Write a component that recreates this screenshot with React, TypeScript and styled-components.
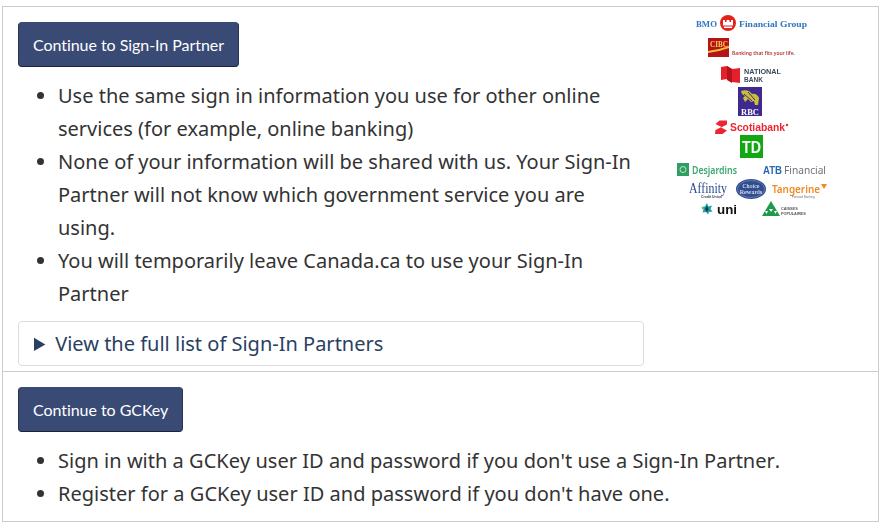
import React from 'react';
import styled, { createGlobalStyle } from 'styled-components';

const GlobalStyle = createGlobalStyle`
  html, body {
    margin: 0;
    padding: 0;
    background: #fff;
  }
  body {
    font-family: "Noto Sans", sans-serif;
    font-size: 20px;
    line-height: 33px;
    color: #333;
  }
`;

const Page = styled.div`
  width: 877px;
  margin: 6px 0 0 2px;
  border: 1px solid #ccc;
  box-sizing: border-box;
`;

const Section = styled.section<{ $divided?: boolean }>`
  padding: 15px 15px 0;
  border-top: ${(p) => (p.$divided ? '1px solid #ccc' : '0')};
`;

const Row = styled.div`
  display: flex;
  align-items: flex-start;
`;

const Main = styled.div`
  width: 626px;
  flex: none;
`;

const Button = styled.a`
  display: block;
  width: fit-content;
  box-sizing: border-box;
  height: 45px;
  padding: 0 14px;
  font-family: Lato, sans-serif;
  font-size: 16px;
  letter-spacing: -0.05px;
  line-height: 43px;
  color: #fff;
  background: #394a75;
  border: 1px solid #333;
  border-color: #3a4a75 #2a3350 #1c2338 #2a3350;
  border-radius: 4px;
`;

const List = styled.ul<{ $loose?: boolean }>`
  margin: 12px 0 11px;
  padding-left: 40px;
  font-kerning: ${(p) => (p.$loose ? 'none' : 'normal')};
  word-spacing: ${(p) => (p.$loose ? '0.08px' : '0')};
`;

const Details = styled.details`
  box-sizing: border-box;
  height: 45px;
  margin-bottom: 5px;
  padding: 5px 15px;
  border: 1px solid #ddd;
  border-radius: 4px;
`;

const Summary = styled.summary`
  color: #284162;
  cursor: pointer;
`;

const Logos = styled.svg`
  display: block;
  flex: none;
  margin: -11px 0 0 16px;
  filter: blur(0.25px);
`;

const serif = '"Liberation Serif", serif';
const sans = '"Liberation Sans", sans-serif';
const noto = '"Noto Sans", sans-serif';

const Fit = ({ w, ...props }: { w: number } & React.SVGProps<SVGTextElement>) => (
  <text textLength={w} lengthAdjust="spacingAndGlyphs" {...props} />
);

const PartnerLogos = () => (
  <Logos width="190" height="210" viewBox="660 10 190 210">
    {/* BMO */}
    <Fit w={21} x="696" y="25.500" fontFamily={serif} fontSize="8.400" fontWeight="700" fill="#2f74c0">BMO</Fit>
    <circle cx="728" cy="22" r="8" fill="#e2231a" />
    <path d="M723 19h2v2h1.500v-2h3v2h1.500v-2h2v5.500h-10z M724 25.500h8v1.500h-8z" fill="#fff" />
    <Fit w={68} x="739" y="25.500" fontFamily={serif} fontSize="8.600" fontWeight="700" fill="#2f74c0">Financial Group</Fit>
    {/* CIBC */}
    <rect x="708" y="37" width="21" height="19" fill="#b5121b" />
    <path d="M708 50q10-1 21-5v2q-11 4-21 5z" fill="#f2c230" />
    <Fit w={18} x="710" y="46" fontFamily={serif} fontSize="7.500" fontWeight="700" fill="#f6d24a">CIBC</Fit>
    <Fit w={63} x="732" y="54" fontFamily={noto} fontSize="5.700" fontWeight="600" fill="#b5343a">Banking that fits your life.</Fit>
    {/* National Bank */}
    <path d="M721 66l6-1 5 3 8-1v15l-8-1-5-3-6 1z" fill="#e4202c" />
    <path d="M727 65v14l5 3v-14z" fill="#b5121b" />
    <Fit w={37} x="744" y="73" fontFamily={sans} fontSize="7" fontWeight="700" fill="#3c4a5c">NATIONAL</Fit>
    <Fit w={19} x="744" y="80.500" fontFamily={sans} fontSize="7" fontWeight="700" fill="#3c4a5c">BANK</Fit>
    {/* RBC */}
    <rect x="738" y="86" width="24" height="29" fill="#3e2a8f" />
    <path d="M741 90c5-2 9 0 11 3 3-1 6 1 7 4l-1 7h-3l-1-4-3 1-3-3-3 3-2-4 2-2-3-2z" fill="#c9bd3a" />
    <path d="M744 93l8 7M748 91l7 8" stroke="#3e2a8f" strokeWidth="1" fill="none" />
    <Fit w={18} x="741" y="114" fontFamily={serif} fontSize="8.500" fontWeight="700" fill="#fff">RBC</Fit>
    {/* Scotiabank */}
    <path d="M727 119.500h-7.500l-4 3.500 6 3-6 3-.5 4h7.500l4.500-3.500-6-3 6-3z" fill="#ec2434" />
    <Fit w={55} x="730" y="130" fontFamily={sans} fontSize="11" fontWeight="700" fill="#ec2434">Scotiabank</Fit>
    <circle cx="787" cy="124" r="1.200" fill="#ec2434" />
    {/* TD */}
    <rect x="740" y="134" width="23" height="23" fill="#12a812" />
    <Fit w={19} x="742" y="152" fontFamily={sans} fontSize="16" fontWeight="700" fill="#fff">TD</Fit>
    {/* Desjardins / ATB */}
    <rect x="677" y="162" width="12" height="13" fill="#2e9e63" />
    <circle cx="683" cy="168.500" r="3" fill="none" stroke="#bfe6cf" strokeWidth="1" />
    <Fit w={45} x="692" y="173" fontFamily={noto} fontSize="10.500" fontWeight="600" fill="#3aa772">Desjardins</Fit>
    <Fit w={19} x="763" y="172.500" fontFamily={sans} fontSize="11" fontWeight="700" fill="#2a68b0">ATB</Fit>
    <Fit w={42} x="784" y="172.500" fontFamily={noto} fontSize="10.500" fill="#6d7278">Financial</Fit>
    {/* Affinity */}
    <Fit w={38} x="689" y="191.500" fontFamily={serif} fontSize="15" fill="#2a4a8a">Affinity</Fit>
    <text x="701" y="196.500" fontFamily={sans} fontSize="3.500" fontWeight="700" fill="#444">Credit Union</text>
    {/* Choice Rewards */}
    <ellipse cx="751" cy="188" rx="15" ry="10" fill="#2f4d8f" />
    <ellipse cx="751" cy="188" rx="13.500" ry="8.500" fill="none" stroke="#8fa5cf" strokeWidth=".5" />
    <text x="751" y="186.500" textAnchor="middle" fontFamily={serif} fontSize="6" fill="#fff">Choice</text>
    <text x="751" y="192.500" textAnchor="middle" fontFamily={serif} fontSize="6.500" fill="#fff">Rewards</text>
    {/* Tangerine */}
    <Fit w={48} x="772" y="192" fontFamily={noto} fontSize="11" fontWeight="600" fill="#f08a24">Tangerine</Fit>
    <path d="M821 183h6l-3 5z" fill="#f08a24" />
    <text x="792" y="196.500" fontFamily={sans} fontSize="3" fill="#777">Forward Banking</text>
    {/* UNI */}
    <path d="M707 202l1.500 3.500 3.500-1-1.500 3.500 2 2.500-3.500.5-1 2.500-2-2.500-3.500.5 1-3-2-2.500 3.500-.5z" fill="#17a2a0" />
    <path d="M707 205l1.500 3-1.500 3-2-3z" fill="#1d2d5a" />
    <circle cx="703" cy="207" r="1.300" fill="#6cbe45" />
    <Fit w={20} x="717" y="212.500" fontFamily={sans} fontSize="12.500" fontWeight="700" fill="#111">uni</Fit>
    {/* Caisses populaires */}
    <path d="M771 200l9 15h-18z" fill="#1f9a4a" />
    <path d="M769 208h4l-2 3z M765 210h3l-1.500 3z M774 210h3l-1.500 3z" fill="#fff" />
    <text x="781" y="209" fontFamily={sans} fontSize="3.800" fontWeight="700" fill="#555">CAISSES</text>
    <text x="781" y="214" fontFamily={sans} fontSize="3.800" fontWeight="700" fill="#555">POPULAIRES</text>
  </Logos>
);

export default function App() {
  return (
    <>
      <GlobalStyle />
      <Page>
        <Section>
          <Row>
            <Main>
              <Button>Continue to Sign-In Partner</Button>
              <List>
                <li>Use the same sign in information you use for other online services (for example, online banking)</li>
                <li>None of your information will be shared with us. Your Sign-In Partner will not know which government service you are using.</li>
                <li>You will temporarily leave Canada.ca to use your Sign-In Partner</li>
              </List>
              <Details>
                <Summary>View the full list of Sign-In Partners</Summary>
              </Details>
            </Main>
            <PartnerLogos />
          </Row>
        </Section>
        <Section $divided>
          <Button>Continue to GCKey</Button>
          <List $loose>
            <li>Sign in with a GCKey user ID and password if you don't use a Sign-In Partner.</li>
            <li>Register for a GCKey user ID and password if you don't have one.</li>
          </List>
        </Section>
      </Page>
    </>
  );
}
